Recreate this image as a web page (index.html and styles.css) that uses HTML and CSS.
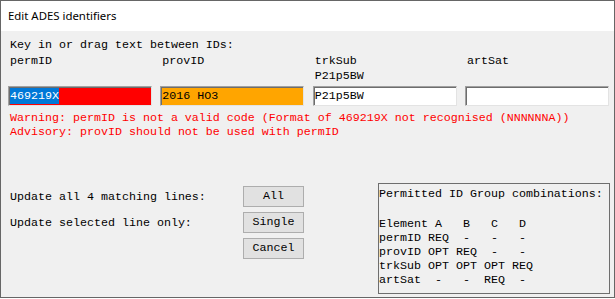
FILE: index.html
```html
<!DOCTYPE html>
<html>
<head>
<meta charset="utf-8">
<title>Edit ADES identifiers</title>
<link rel="stylesheet" href="styles.css">
</head>
<body>
<div class="window">
  <div class="titlebar">Edit ADES identifiers</div>
  <div class="content">
    <div class="intro">Key in or drag text between IDs:</div>
    <div class="ids">
      <div class="id-col">
        <div class="id-label">permID</div>
        <div class="id-sub"></div>
        <div class="field field-red"><span class="sel">469219X</span></div>
      </div>
      <div class="id-col">
        <div class="id-label">provID</div>
        <div class="id-sub"></div>
        <div class="field field-orange">2016 HO3</div>
      </div>
      <div class="id-col">
        <div class="id-label">trkSub</div>
        <div class="id-sub">P21p5BW</div>
        <div class="field">P21p5BW</div>
      </div>
      <div class="id-col">
        <div class="id-label">artSat</div>
        <div class="id-sub"></div>
        <div class="field"></div>
      </div>
    </div>
    <div class="messages">
      <div class="msg">Warning: permID is not a valid code (Format of 469219X not recognised (NNNNNNA))</div>
      <div class="msg">Advisory: provID should not be used with permID</div>
    </div>
    <div class="lower">
      <div class="actions">
        <div class="action-label">Update all 4 matching lines:</div>
        <button class="btn">All</button>
        <div class="action-label">Update selected line only:</div>
        <button class="btn">Single</button>
        <div class="action-label"></div>
        <button class="btn">Cancel</button>
      </div>
      <div class="combos">
        <div class="combos-title">Permitted ID Group combinations:</div>
<pre class="combos-table">Element A   B   C   D
permID REQ  -   -   -
provID OPT REQ  -   -
trkSub OPT OPT OPT REQ
artSat  -   -  REQ  -</pre>
      </div>
    </div>
  </div>
</div>
</body>
</html>
```

FILE: styles.css
```css
html, body {
  margin: 0;
  padding: 0;
  background: #ffffff;
}

.window {
  width: 615px;
  height: 298px;
  box-sizing: border-box;
  border: 1px solid #666666;
  display: flex;
  flex-direction: column;
  overflow: hidden;
}

.titlebar {
  height: 30px;
  line-height: 30px;
  background: #ffffff;
  padding-left: 7px;
  font-family: "Noto Sans", "Open Sans", sans-serif;
  font-size: 11.4px;
  color: #000000;
  flex: none;
}

.content {
  flex: 1;
  background: #f0f0f0;
  padding: 6px 3px 0 7px;
  font-family: "Liberation Mono", "Courier New", monospace;
  font-size: 11.67px;
  color: #000000;
}

.intro {
  line-height: 17px;
  padding-left: 2px;
  white-space: pre;
}

.ids {
  display: grid;
  grid-template-columns: repeat(4, 144px);
  column-gap: 8.33px;
}

.id-label,
.id-sub {
  line-height: 15px;
  height: 15px;
  padding-left: 2px;
  white-space: pre;
}

.field {
  margin-top: 2px;
  height: 20px;
  box-sizing: border-box;
  background: #ffffff;
  border-top: 1px solid #a0a0a0;
  border-left: 1px solid #a0a0a0;
  border-right: 1px solid #e3e3e3;
  border-bottom: 1px solid #e3e3e3;
  box-shadow: inset 1px 1px 0 #6d6d6d;
  padding-left: 1px;
  padding-top: 1px;
  line-height: 16px;
  white-space: pre;
}

.field-red {
  background: #ff0000;
}

.field-orange {
  background: #ffa500;
}

.sel {
  display: inline-block;
  background: #0078d7;
  color: #ffffff;
  height: 16px;
}

.messages {
  margin-top: 5px;
  padding-left: 2px;
  line-height: 14px;
  color: #ff0000;
}

.msg {
  white-space: pre;
}

.lower {
  margin-top: 44px;
  display: flex;
  align-items: flex-start;
  justify-content: space-between;
}

.actions {
  padding-top: 3px;
  padding-left: 2px;
  display: grid;
  grid-template-columns: 233px 61px;
  grid-auto-rows: 21px;
  row-gap: 5px;
}

.action-label {
  padding-top: 2px;
  line-height: 19px;
  white-space: pre;
}

.btn {
  margin: 0;
  padding: 0;
  height: 21px;
  width: 61px;
  box-sizing: border-box;
  border: 1px solid #adadad;
  background: #e1e1e1;
  font-family: "Liberation Mono", "Courier New", monospace;
  font-size: 11.67px;
  line-height: 19px;
  color: #000000;
}

.combos {
  width: 232px;
  height: 111px;
  box-sizing: border-box;
  border: 1px solid #6e6e6e;
  padding-top: 3px;
  margin-right: 1px;
  line-height: 14px;
}

.combos-title {
  white-space: pre;
  margin-bottom: 16px;
}

.combos-table {
  margin: 0;
  font-family: "Liberation Mono", "Courier New", monospace;
  font-size: 11.67px;
  line-height: 14px;
}
```
